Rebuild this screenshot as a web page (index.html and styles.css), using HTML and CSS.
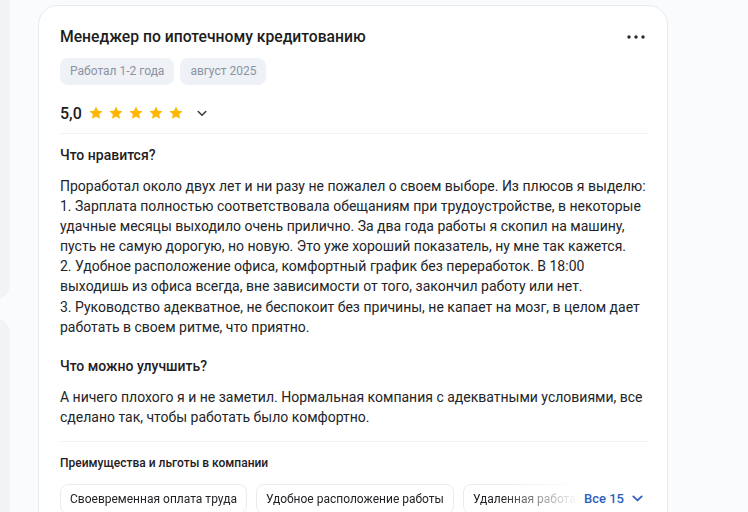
FILE: index.html
```html
<!DOCTYPE html>
<html lang="ru">
<head>
<meta charset="utf-8">
<link rel="stylesheet" href="styles.css">
</head>
<body>
<div class="page">
  <div class="side">
    <div class="side-block side-top"></div>
    <div class="side-block side-bottom"></div>
  </div>
  <article class="card">
    <header class="head">
      <h2 class="title">Менеджер по ипотечному кредитованию</h2>
      <button class="more" aria-label="Ещё">
        <svg width="18" height="4" viewBox="0 0 18 4"><circle cx="2" cy="2" r="1.7"/><circle cx="9" cy="2" r="1.7"/><circle cx="16" cy="2" r="1.7"/></svg>
      </button>
    </header>
    <div class="tags">
      <span class="tag">Работал 1-2 года</span>
      <span class="tag">август 2025</span>
    </div>
    <div class="rating">
      <span class="score">5,0</span>
      <span class="stars">
        <svg class="star" viewBox="0 0 24 24"><path d="M12 2.2l2.95 6.3 6.85.8-5.07 4.7 1.35 6.8L12 17.4l-6.08 3.4 1.35-6.8L2.2 9.3l6.85-.8z"/></svg>
        <svg class="star" viewBox="0 0 24 24"><path d="M12 2.2l2.95 6.3 6.85.8-5.07 4.7 1.35 6.8L12 17.4l-6.08 3.4 1.35-6.8L2.2 9.3l6.85-.8z"/></svg>
        <svg class="star" viewBox="0 0 24 24"><path d="M12 2.2l2.95 6.3 6.85.8-5.07 4.7 1.35 6.8L12 17.4l-6.08 3.4 1.35-6.8L2.2 9.3l6.85-.8z"/></svg>
        <svg class="star" viewBox="0 0 24 24"><path d="M12 2.2l2.95 6.3 6.85.8-5.07 4.7 1.35 6.8L12 17.4l-6.08 3.4 1.35-6.8L2.2 9.3l6.85-.8z"/></svg>
        <svg class="star" viewBox="0 0 24 24"><path d="M12 2.2l2.95 6.3 6.85.8-5.07 4.7 1.35 6.8L12 17.4l-6.08 3.4 1.35-6.8L2.2 9.3l6.85-.8z"/></svg>
      </span>
      <svg class="chev" width="10" height="7" viewBox="0 0 10 7"><path d="M1.2 1.5L5 5.2l3.8-3.7" fill="none" stroke="#3a3f47" stroke-width="1.6" stroke-linecap="round" stroke-linejoin="round"/></svg>
    </div>
    <hr class="divider">
    <section class="block">
      <h3 class="sub">Что нравится?</h3>
      <p class="text">Проработал около двух лет и ни разу не пожалел о своем выборе. Из плюсов я выделю:<br>1. Зарплата полностью соответствовала обещаниям при трудоустройстве, в некоторые удачные месяцы выходило очень прилично. За два года работы я скопил на машину, пусть не самую дорогую, но новую. Это уже хороший показатель, ну мне так кажется.<br>2. Удобное расположение офиса, комфортный график без переработок. В 18:00 выходишь из офиса всегда, вне зависимости от того, закончил работу или нет.<br>3. Руководство адекватное, не беспокоит без причины, не капает на мозг, в целом дает работать в своем ритме, что приятно.</p>
    </section>
    <section class="block block-second">
      <h3 class="sub">Что можно улучшить?</h3>
      <p class="text">А ничего плохого я и не заметил. Нормальная компания с адекватными условиями, все сделано так, чтобы работать было комфортно.</p>
    </section>
    <hr class="divider divider-low">
    <section class="perks">
      <h4 class="perks-title">Преимущества и льготы в компании</h4>
      <div class="perks-row">
        <div class="chips">
          <span class="chip">Своевременная оплата труда</span>
          <span class="chip">Удобное расположение работы</span>
          <span class="chip">Удаленная работа</span>
        </div>
        <a class="all" href="#">Все 15
          <svg width="11" height="7" viewBox="0 0 11 7"><path d="M1.3 1.4L5.5 5.4l4.2-4" fill="none" stroke="#2d5fbf" stroke-width="1.8" stroke-linecap="round" stroke-linejoin="round"/></svg>
        </a>
      </div>
    </section>
  </article>
</div>
</body>
</html>
```
FILE: styles.css
```css
* { box-sizing: border-box; }
html, body { margin: 0; padding: 0; }
body {
  background: #fafbfc;
  font-family: Roboto, "Noto Sans", Arial, sans-serif;
  color: #222326;
  overflow: hidden;
  height: 512px;
}
.page {
  display: flex;
  align-items: flex-start;
}
.side {
  width: 30px;
  margin-left: -20px;
  display: flex;
  flex-direction: column;
  gap: 18px;
  margin-top: -20px;
}
.side-block {
  background: #f2f3f7;
  border-radius: 0 16px 16px 0;
}
.side-top { height: 320px; }
.side-bottom { height: 300px; }
.card {
  margin-left: 28px;
  margin-top: 5px;
  width: 630px;
  background: #fff;
  border: 1px solid #e7ebf1;
  border-radius: 20px;
  padding: 19px 19px 20px 21px;
}
.head {
  display: flex;
  justify-content: space-between;
  align-items: center;
}
.title {
  margin: 0;
  font-size: 15.7px;
  line-height: 24px;
  font-weight: 500;
  color: #1c1d20;
}
.more {
  border: 0;
  background: none;
  padding: 0;
  margin-right: 3px;
  display: flex;
  fill: #26292e;
}
.tags {
  display: flex;
  gap: 6px;
  margin-top: 9px;
}
.tag {
  background: #eef1f6;
  color: #8b93a1;
  font-size: 12px;
  line-height: 27px;
  padding: 0 10px;
  border-radius: 8px;
}
.rating {
  display: flex;
  align-items: center;
  margin-top: 14px;
  height: 28px;
}
.score {
  font-size: 16px;
  font-weight: 500;
  color: #1c1d20;
  margin-right: 6px;
}
.stars {
  display: flex;
  gap: 4px;
}
.star {
  width: 16px;
  height: 16px;
  fill: #ffb600;
}
.chev {
  margin-left: 13px;
}
.divider {
  border: 0;
  border-top: 1px solid #f1f2f5;
  margin: 6px 0 0 0;
}
.block { margin-top: 11px; }
.block-second { margin-top: 19px; }
.sub {
  margin: 0;
  font-size: 14px;
  line-height: 20px;
  font-weight: 500;
  color: #1f2024;
}
.text {
  margin: 11px 0 0 0;
  font-size: 14px;
  line-height: 20.1px;
  color: #232428;
}
.divider-low { margin-top: 14px; }
.perks { margin-top: 12px; }
.perks-title {
  margin: 0;
  font-size: 12px;
  line-height: 18px;
  font-weight: 500;
  color: #1f2024;
}
.perks-row {
  display: flex;
  align-items: center;
  margin-top: 12px;
}
.chips {
  flex: 1;
  min-width: 0;
  display: flex;
  gap: 9px;
  overflow: hidden;
  -webkit-mask-image: linear-gradient(to right, #000 85%, transparent 100%);
  mask-image: linear-gradient(to right, #000 85%, transparent 100%);
}
.chip {
  flex: none;
  border: 1px solid #e9ebef;
  border-radius: 8px;
  font-size: 12px;
  line-height: 28px;
  padding: 0 9px;
  color: #222326;
}
.all {
  flex: none;
  white-space: nowrap;
  margin-left: 6px;
  margin-right: 5px;
  display: flex;
  align-items: center;
  gap: 8px;
  color: #2d5fbf;
  font-size: 13px;
  font-weight: 500;
  text-decoration: none;
}
```
